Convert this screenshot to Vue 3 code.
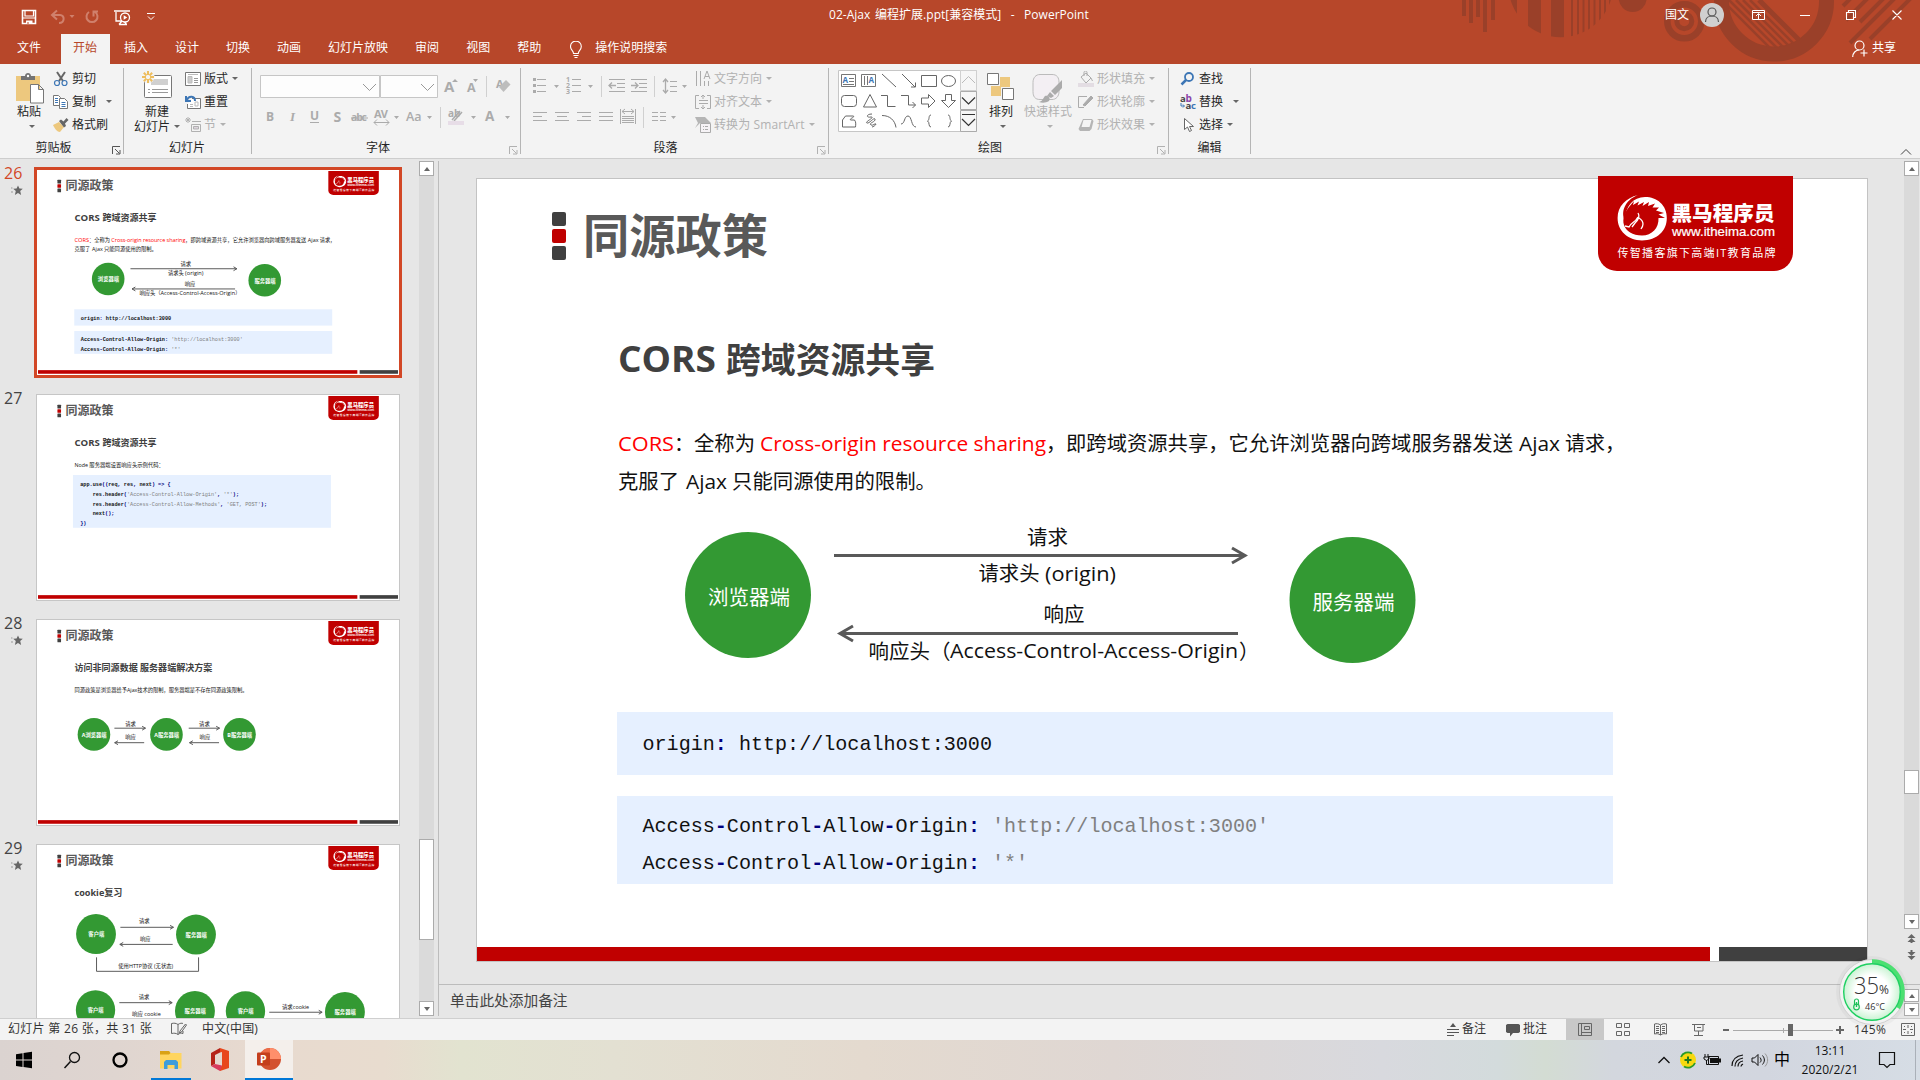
<script setup>
import { h } from 'vue'

const tabs = ['插入', '设计', '切换', '动画', '幻灯片放映', '审阅', '视图', '帮助']

// Text run: [x, baseline, size, text, width, class]
const t = (x, y, size, text, w, cls = 'ink') => ({ k: 'text', x, y, size, text, w, cls })
const circle = (x, y, r, label, w) => [
  { k: 'circle', x, y, r },
  t(x - w / 2 + 1, y + 9.5, 20.5, label, w, 'on-green')
]
const arrow = (x1, x2, y) => ({ k: 'arrow', x1, x2, y })
const box = (x, y, w, hgt) => ({ k: 'box', x, y, w, h: hgt })
const code = (x, y, runs) => ({ k: 'code', x, y, runs })

const allow = [['Access', ''], ['-', 'op'], ['Control', ''], ['-', 'op'], ['Allow', ''], ['-', 'op'], ['Origin', ''], [':', 'op']]
const corsTitle = [t(618, 371.5, 36, 'CORS', 98, 'head'), t(726, 373, 35, '跨域资源共享', 209, 'head')]

const slides = [
  {
    no: 26, star: true, items: [
      ...corsTitle,
      t(618, 451, 20.5, 'CORS', 56, 'red'), t(674, 451, 20.5, '：', 20),
      t(694, 451, 20.5, '全称为', 61), t(760, 451, 20.5, 'Cross-origin resource sharing', 286, 'red'),
      t(1046, 451, 20.5, '，', 20), t(1066, 451, 20.5, '即跨域资源共享，它允许浏览器向跨域服务器发送', 447),
      t(1519, 451, 20.5, 'Ajax', 41), t(1565, 451, 20.5, '请求，', 60),
      t(618, 488.5, 20.5, '克服了', 61), t(686, 488.5, 20.5, 'Ajax', 41), t(732, 488.5, 20.5, '只能同源使用的限制。', 204),
      ...circle(748, 595, 63, '浏览器端', 82), ...circle(1352.5, 600, 63, '服务器端', 82),
      arrow(834, 1245, 555.5), arrow(1238, 840, 633.5),
      t(1027, 544.5, 20.5, '请求', 41), t(978.5, 581, 20.5, '请求头', 61), t(1045, 581, 20.5, '(origin)', 71),
      t(1043.5, 621.5, 20.5, '响应', 41), t(868.5, 658.5, 20.5, '响应头（', 82),
      t(950, 658, 20.5, 'Access-Control-Access-Origin', 288), t(1239, 658.5, 20.5, '）', 20),
      box(617, 712, 996, 63), box(617, 796, 996, 88),
      code(642.500, 750, [['origin', ''], [':', 'op'], [' http://localhost:3000', '']]),
      code(642.500, 832, [...allow, [" 'http://localhost:3000'", 'str']]),
      code(642.500, 869, [...allow, [" '*'", 'str']])
    ]
  },
  {
    no: 27, star: false, items: [
      ...corsTitle,
      t(618, 454, 20.5, 'Node 服务器端设置响应头示例代码：', 345),
      box(612, 483, 996, 204),
      code(640, 522, [['app', ''], ['.', 'op'], ['use', ''], ['((', 'op'], ['req', ''], [',', 'op'], [' res', ''], [',', 'op'], [' next', ''], [') => {', 'op']]),
      code(688, 560, [['res', ''], ['.', 'op'], ['header', ''], ['(', 'op'], ["'Access-Control-Allow-Origin'", 'str'], [', ', 'op'], ["'*'", 'str'], [');', 'op']]),
      code(688, 599, [['res', ''], ['.', 'op'], ['header', ''], ['(', 'op'], ["'Access-Control-Allow-Methods'", 'str'], [', ', 'op'], ["'GET, POST'", 'str'], [');', 'op']]),
      code(688, 635, [['next', ''], ['();', 'op']]),
      code(640, 672, [['})', 'op']])
    ]
  },
  {
    no: 28, star: true, items: [
      t(618, 373, 35, '访问非同源数据 服务器端解决方案', 532, 'head'),
      t(618, 454, 20.5, '同源政策是浏览器给予Ajax技术的限制，服务器端是不存在同源政策限制。', 668),
      ...circle(693, 616, 63, 'A浏览器端', 96), ...circle(973, 616, 63, 'A服务器端', 96), ...circle(1255, 616, 63, 'B服务器端', 96),
      arrow(772, 892, 592), arrow(1059, 1178, 592), arrow(887, 773, 648), arrow(1176, 1062, 648),
      t(814, 584, 20.5, '请求', 41), t(1099, 584, 20.5, '请求', 41), t(814, 635, 20.5, '响应', 41), t(1101, 635, 20.5, '响应', 41)
    ]
  },
  {
    no: 29, star: true, items: [
      t(618, 373, 35, 'cookie', 115, 'head'), t(733, 373, 35, '复习', 70, 'head'),
      ...circle(701, 518, 77, '客户端', 61), ...circle(1087, 520, 77, '服务器端', 82),
      arrow(795, 1000, 492), arrow(997, 793, 558),
      t(867, 477, 20.5, '请求', 41), t(871, 546, 20.5, '响应', 41),
      { k: 'bracket', d: 'M703 608V662H1097V608' },
      t(787, 649, 20.5, '使用HTTP协议 (无状态)', 212),
      ...circle(699, 811, 76, '客户端', 61), ...circle(1083, 815, 77, '服务器端', 82),
      ...circle(1278, 815, 76, '客户端', 61), ...circle(1662, 819, 77, '服务器端', 82),
      arrow(791, 995, 783), arrow(997, 795, 855), arrow(1370, 1574, 820),
      t(866, 770, 20.5, '请求', 41), t(840, 835, 20.5, '响应 cookie', 111), t(1419, 808, 20.5, '请求cookie', 105)
    ]
  }
]

const svgText = (i) => h('text', { x: i.x, y: i.y, 'font-size': i.size, textLength: i.w, lengthAdjust: 'spacingAndGlyphs', class: 'st-' + i.cls }, i.text)

function drawItem(i) {
  if (i.k === 'text') return svgText(i)
  if (i.k === 'circle') return h('circle', { cx: i.x, cy: i.y, r: i.r, fill: '#339933' })
  if (i.k === 'box') return h('rect', { x: i.x, y: i.y, width: i.w, height: i.h, fill: '#e6f0ff' })
  if (i.k === 'bracket') return h('path', { d: i.d, class: 'st-line' })
  if (i.k === 'arrow') {
    const b = i.x2 > i.x1 ? -13 : 13
    return h('path', { class: 'st-line', d: `M${i.x1} ${i.y}H${i.x2}M${i.x2 + b} ${i.y - 7.5}L${i.x2} ${i.y}L${i.x2 + b} ${i.y + 7.5}` })
  }
  return h('text', { x: i.x, y: i.y, class: 'st-code' }, i.runs.map(([s, c]) => h('tspan', { class: c ? 'c-' + c : '' }, s)))
}

const logo = () => h('g', null, [
  h('path', { d: 'M1598 176H1793V252A19 19 0 0 1 1774 271H1617A19 19 0 0 1 1598 252Z', fill: '#c00000' }),
  h('path', { d: 'M1638 195C1626 198 1617.6 206 1617.6 218C1617.6 231 1628 240.400 1642 240.400C1657 240.400 1666.800 231 1666.800 218C1666.800 205 1657 197 1645 197C1633 197 1626 206 1624.500 220C1620 209 1628 198.500 1638 195Z', fill: '#fff' }),
  h('path', { d: 'M1629 207L1634 201L1633 205L1639 201.500L1637.500 205.500L1644 202L1642.500 206L1649 202L1648 206L1655 203.500L1652.500 207.500L1659 207.500L1656 210.500L1664 213L1658.500 214.500L1665 218L1658.500 218C1659 228 1652 235.500 1642 235.500C1632.500 235.500 1626 231 1624 225C1622 219 1625 212 1629 207Z', fill: '#c00000' }),
  h('path', { d: 'M1625 226L1629 227C1631 222 1635 223 1638 217M1638 213C1640 216 1639 219 1635 223L1632 227M1639 218C1645 222 1643 226 1641 229', fill: 'none', stroke: '#fff', 'stroke-width': 1.3 }),
  h('text', { x: 1671.5, y: 221, 'font-size': 20, textLength: 103, lengthAdjust: 'spacingAndGlyphs', class: 'st-logo-b' }, '黑马程序员'),
  h('text', { x: 1672, y: 235.6, 'font-size': 12.5, textLength: 103, lengthAdjust: 'spacingAndGlyphs', class: 'st-logo-u' }, 'www.itheima.com'),
  h('text', { x: 1617.5, y: 256.5, 'font-size': 11, textLength: 158, class: 'st-logo-s' }, '传智播客旗下高端IT教育品牌')
])

const SlideArt = (props) => h('svg', { viewBox: '477 179 1390 782', class: ['slide-art', props.small ? 'small' : ''] }, [
  h('rect', { x: 552, y: 212, width: 14, height: 14, rx: 2, fill: '#404040' }),
  h('rect', { x: 552, y: 229, width: 14, height: 14, rx: 2, fill: '#c00000' }),
  h('rect', { x: 552, y: 246, width: 14, height: 14, rx: 2, fill: '#404040' }),
  svgText(t(583, 253, 47, '同源政策', 185, 'title')),
  h('rect', { x: 477, y: 947, width: 1233, height: 14, fill: '#c00000' }),
  h('rect', { x: 1719, y: 947, width: 148, height: 14, fill: '#404040' }),
  ...props.items.map(drawItem),
  logo()
])
SlideArt.props = ['items', 'small']
</script>

<template>
  <div class="app">
    <header class="head">
      <svg class="pattern" width="500" height="64" viewBox="1420 0 500 64">
        <defs>
          <clipPath id="disc"><circle cx="1560.7" cy="-15" r="52.3" /></clipPath>
          <clipPath id="hole"><circle cx="1774" cy="1.500" r="46" /></clipPath>
        </defs>
        <g fill="#9a4029">
          <path d="M1462 0h4v16h-4zM1469 0h4v23h-4zM1476 0h4v17h-4zM1483 0h4v32h-4zM1491 0h4v20h-4z" />
          <path clip-path="url(#disc)" d="M1508 0h9v40h-9zM1528 0h13v40h-13zM1551 0h13v40h-13zM1571 0h2v40h-2zM1577 0h2v40h-2zM1582.500 0h2v40h-2zM1588 0h2v40h-2zM1593.500 0h2v40h-2zM1599 0h2v40h-2zM1604 0h2v40h-2zM1609 0h3v40h-3z" />
          <circle cx="1632.700" cy="-2" r="14" />
        </g>
        <g fill="none" stroke="#9a4029">
          <circle cx="1684.300" cy="21.300" r="17" stroke-width="6.600" />
          <circle cx="1684.300" cy="21.300" r="7.500" stroke-width="5" />
          <circle cx="1774" cy="1.500" r="52.500" stroke-width="15" />
          <path clip-path="url(#hole)" stroke-width="2.600" d="M1722 0l60 60M1729 0l60 60M1736 0l60 60M1743 0l60 60M1750 0l60 60" />
          <path clip-path="url(#hole)" stroke-width="5" d="M1759 0l50 50" />
          <path stroke-width="4" d="M1843 6l8-8M1846 20l22-22M1860 22l24-24M1850 43l46-46M1870 39l41-41" />
        </g>
      </svg>
      <div class="titlebar">
        <svg width="160" height="34" viewBox="0 0 160 34" fill="none" stroke="#fff">
          <path d="M22.500 10.500h13v13h-13z" stroke-width="1.600" /><path d="M25 10.500v5.500h8.500v-5.500M22.500 18h13" stroke-width="1.200" /><path d="M26 20.500h6.500v3.500h-6.500z" fill="#fff" stroke="none" /><path d="M28 22v2" stroke="#b7472a" />
          <g stroke="#d0806c" stroke-width="2"><path d="M57 10.500l-5 4.500 5 4.500M52 15h8c5 0 5 8-1 8" /><path d="M69.500 15h5l-2.500 3z" fill="#d0806c" stroke="none" /><path d="M89 12a5.500 5.500 0 1 0 6 0M98 11.500h-4.500v5" /></g>
          <path d="M114 11h16M116 12v9h6M119 24.500h8M122 21l-3 3.500M124 21l2.500 3.500" stroke-width="1.300" /><circle cx="125" cy="17.500" r="4.500" fill="#b7472a" stroke-width="1.300" /><path d="M123.700 15.300v4.400l3.500-2.200z" fill="#fff" stroke="none" />
          <path d="M147 13.500h8M148 16.500l3 3 3-3" />
        </svg>
        <div class="doc-title">02-Ajax 编程扩展.ppt[兼容模式]&nbsp; -&nbsp; PowerPoint</div>
        <div class="user">国文</div>
        <svg width="231" height="34" viewBox="1689 0 231 34" fill="none" stroke="#fff">
          <circle cx="1712" cy="15" r="12" fill="#d0d0d0" stroke="none" /><circle cx="1712" cy="12" r="4" stroke="#555" stroke-width="1.200" /><path d="M1705.500 22c0-8 13-8 13 0" stroke="#555" stroke-width="1.200" />
          <path d="M1752.500 10.500h12v9h-12zM1752.500 12.500h12M1758.500 19v-5M1756 16l2.500-2.500 2.500 2.500" />
          <path d="M1800 15.500h10" /><path d="M1846.500 12.500h7v7h-7zM1848.500 12.500v-2h7v7h-2M1892.500 10.500l9 9M1901.500 10.500l-9 9" stroke-width="1.100" />
        </svg>
      </div>
      <nav class="tabs">
        <span class="file">文件</span>
        <span class="active">开始</span>
        <span v-for="x in tabs" :key="x">{{ x }}</span>
        <svg class="bulb" width="12" height="18" viewBox="0 0 12 18" fill="none" stroke="#fff" stroke-width="1.100"><path d="M3.500 12.500c0-3-3-3.500-3-7a5.400 5.400 0 0 1 10.800 0c0 3.500-3 4-3 7zM3.500 14.500h5M4.500 16.500h3" /></svg>
        <span class="tell">操作说明搜索</span>
        <div class="share">
          <svg width="16" height="18" viewBox="0 0 16 18" fill="none" stroke="#fff" stroke-width="1.200"><circle cx="7.500" cy="5.500" r="4.500" /><path d="M.700 17c0-4 3-7 6.500-7M12 9.500v7M8.500 13h7" /></svg>
          共享
        </div>
      </nav>
    </header>

    <section class="ribbon">
      <div class="group g1">
        <div class="body">
          <div class="big paste">
            <svg width="30" height="32" viewBox="16 71 30 32"><path d="M17 75h24v25H17z" fill="#edc87e" /><path d="M22 79v-4h4c0-4 6-4 6 0h4v4z" fill="#737373" /><circle cx="29" cy="75" r="1.200" fill="#fff" /><path d="M31.500 83.500h8l5 5v13.500h-13zM39.500 83.500v5h5" fill="#fff" stroke="#777" /></svg>
            <b>粘贴</b><i class="dd" />
          </div>
          <div class="small-col">
            <div class="sb"><svg width="16" height="16" viewBox="0 0 16 16" fill="none"><path d="M4 1l6 9M12 1L6 10" stroke="#666" stroke-width="2" /><circle cx="4" cy="12" r="2.500" stroke="#3d76b5" stroke-width="1.200" /><circle cx="11.500" cy="12" r="2.500" stroke="#3d76b5" stroke-width="1.200" /></svg>剪切</div>
            <div class="sb"><svg width="16" height="16" viewBox="0 0 16 16" fill="#fff" stroke="#777"><path d="M.500 1.500h5l2 2v8h-7z" /><path d="M6.500 4.500h5l3 3v7h-8z" /><path d="M2 4.500h3M2 6.500h3M2 8.500h3M8.500 8.500h4M8.500 10.500h4M8.500 12.500h4" stroke="#3d76b5" /></svg>复制<i class="dd far" /></div>
            <div class="sb"><svg width="16" height="16" viewBox="0 0 16 16"><path d="M0 8l6-3 5 5-4 5c-3 0-5-3-7-7z" fill="#edc87e" /><path d="M6 4l2-1.500 2.500 2L13.500 1 15.500 3l-3.500 3.500L13 9l-2 1.500z" fill="#666" /></svg>格式刷</div>
          </div>
        </div>
        <div class="label">剪贴板</div>
        <svg class="launch dark" width="9" height="9" viewBox="0 0 9 9"><path d="M.500 8V.500H8M3 3l4.500 4.500M8 4v4H4" /></svg>
      </div>

      <div class="group g2">
        <div class="body">
          <div class="big newslide">
            <svg width="32" height="32" viewBox="140 69 32 32"><rect x="143.500" y="74.500" width="27" height="22" rx="1" fill="#fff" stroke="#777" /><path d="M150 78h17v6h-17z" fill="#d0d0d0" /><path d="M147 88.500h2M151 88.500h16M147 91.500h2M151 91.500h16" stroke="#999" /><circle cx="147" cy="76" r="6.500" fill="#f3f3f3" /><path d="M147 70v4M147 78v4M141 76h4M149 76h4M142.800 71.800l2.700 2.700M148.500 77.500l2.700 2.700M142.800 80.200l2.700-2.700M148.500 74.500l2.700-2.700" stroke="#edbd5e" stroke-width="2" /></svg>
            <b>新建</b><b class="l2">幻灯片<i class="dd" /></b>
          </div>
          <div class="small-col">
            <div class="sb"><svg width="16" height="16" viewBox="0 0 16 16"><path d="M.500 1.500h15v13h-15z" fill="#fff" stroke="#777" /><path d="M3 3.500h10M3 5.500h4v6.500H3z" fill="#ccc" stroke="#bbb" /><path d="M9 7.500h4M9 9.500h4M9 11.500h4" stroke="#999" /></svg>版式<i class="dd" /></div>
            <div class="sb"><svg width="16" height="16" viewBox="0 0 16 16" fill="none"><path d="M7 4.500h8.500v10h-13V10" fill="#fff" stroke="#777" /><path d="M5 10.500h3M5 12.500h3M10 8h3v4h-3z" stroke="#bbb" /><path d="M1 2v5h5M1.500 6.500C4 1 10 2 10 7" stroke="#3d76b5" stroke-width="2" /></svg>重置</div>
            <div class="sb off"><svg width="16" height="16" viewBox="0 0 16 16" stroke="#b1b1b1" fill="none"><path d="M3 0v6M0 3h6M1 1l4 4M5 1L1 5" /><path d="M7 4.500h9M6.500 7.500h9v7h-9z" /><path d="M8.500 9.500h5v2.500h-5z" fill="#ddd3dd" /></svg>节<i class="dd" /></div>
          </div>
        </div>
        <div class="label">幻灯片</div>
      </div>

      <div class="group g3">
        <div class="body">
          <svg width="268" height="72" viewBox="252 64 268 72" fill="none" stroke="#ababab" class="strip">
            <path d="M260.500 75.500h119v22h-119zM380.500 75.500h57v22h-57z" fill="#fdfdfd" stroke="#c6c6c6" />
            <path d="M363 84l6.500 6.500 6.500-6.500M421 84l6.500 6.500 6.500-6.500" stroke="#999" />
            <g class="gl"><text x="444" y="92" font-size="15">A</text><text x="467" y="92" font-size="12.500">A</text><text x="496" y="88" font-size="11">A</text>
              <text x="266" y="121" font-size="12">B</text><text x="290" y="121" font-size="13" class="it">I</text><text x="310" y="120" font-size="12">U</text><text x="333.500" y="121.500" font-size="14">S</text><text x="351" y="121" font-size="10.500" textLength="16">abc</text><text x="374" y="118" font-size="11" textLength="14">AV</text><text x="406" y="121" font-size="12.500" class="nb">Aa</text><text x="448" y="117" font-size="10">ab</text><text x="485" y="121" font-size="13.500">A</text></g>
            <path d="M452 82l3-3 3 3zM473 79h5l-2.500 3zM394 116h5l-2.500 3zM427 116h5l-2.500 3zM471 116h5l-2.500 3zM505 116h5l-2.500 3z" fill="#ababab" stroke="none" />
            <path d="M310 122.500h9M351 118h17M374 122.500h15M377 119.500l-3 3 3 3M386 119.500l3 3-3 3" />
            <path d="M486.500 76v21M440.500 107v21" stroke="#d0d0d0" />
            <path d="M499 87l7-7 4.500 4.500-7 7.500z" fill="#bdbdbd" stroke="none" /><path d="M460 111l-8 9M462 112l-8 9" stroke-width="1.500" /><path d="M448 121h16v4h-16z" fill="#e7dde7" stroke="none" />
          </svg>
        </div>
        <div class="label shift">字体</div>
        <svg class="launch" width="9" height="9" viewBox="0 0 9 9"><path d="M.500 8V.500H8M3 3l4.500 4.500M8 4v4H4" /></svg>
      </div>

      <div class="group g4">
        <div class="body">
          <svg width="170" height="72" viewBox="521 64 170 72" fill="none" stroke="#ababab" class="strip">
            <path d="M537 79.500h9M537 85.500h9M537 91.500h9M572 79.500h9M572 85.500h9M572 91.500h9M609 79.500h16M617 83.500h8M617 87.500h8M609 91.500h16M631 79.500h16M639 83.500h8M639 87.500h8M631 91.500h16M670 81.500h7M670 86.500h7M670 91.500h7" />
            <path d="M533 78h3v3h-3zM533 84h3v3h-3zM533 90h3v3h-3zM554 85h5l-2.500 3zM588 85h5l-2.500 3zM682 85h5l-2.500 3zM671 116h5l-2.500 3z" fill="#ababab" stroke="none" />
            <g class="gl"><text x="566" y="82" font-size="7">1</text><text x="566" y="88" font-size="7">2</text><text x="566" y="94" font-size="7">3</text></g>
            <path d="M616 85.500h-7M612 82.500l-3 3 3 3M631 85.500h7M635 82.500l3 3-3 3M665.500 79v14M663 82l2.500-3 2.500 3M663 90l2.500 3 2.500-3" stroke-width="1.300" />
            <path d="M601.500 76v21M654.500 76v21M643.500 107v21" stroke="#d0d0d0" />
            <path d="M533 112.500h14M533 116.500h9M533 120.500h14M555 112.500h14M557 116.500h10M555 120.500h14M577 112.500h14M582 116.500h9M577 120.500h14M599 112.500h14M599 116.500h14M599 120.500h14M652 112.500h6M652 116.500h6M652 120.500h6M660 112.500h6M660 116.500h6M660 120.500h6" />
            <path d="M620.500 109v15M635.500 109v15M622 111.500h12M625 109l-3 2.500 3 2.500M631 109l3 2.500-3 2.500M622 116.500h12M622 118.500h12M622 120.500h12M622 122.500h12" />
          </svg>
          <div class="small-col">
            <div class="sb off"><svg width="16" height="16" viewBox="0 0 16 16" fill="none" stroke="#ababab"><path d="M1.500 0v15M5.500 0v15M9.500 10v5M13.500 10v5M9 8l3-8 3 8M10 5.500h4" /></svg>文字方向<i class="dd" /></div>
            <div class="sb off"><svg width="16" height="16" viewBox="0 0 16 16" fill="none" stroke="#ababab"><path d="M4 1.500H.500v13H4M12 1.500h3.500v13H12M4 6.500h9M4 9.500h9M8 5V1M6 3l2-2 2 2M8 11v4M6 13l2 2 2-2" /></svg>对齐文本<i class="dd" /></div>
            <div class="sb off"><svg width="16" height="16" viewBox="0 0 16 16"><path d="M0 0h10l6 6H5L0 11l3-5z" fill="#b5b5b5" /><path d="M5.500 6.500h10v9h-10z" fill="#f6f3f6" stroke="#ababab" /><path d="M8 9.500h1M10 9.500h3M8 12.500h1M10 12.500h3" stroke="#ababab" /></svg><span class="smart">转换为 SmartArt</span><i class="dd" /></div>
          </div>
        </div>
        <div class="label shift">段落</div>
        <svg class="launch" width="9" height="9" viewBox="0 0 9 9"><path d="M.500 8V.500H8M3 3l4.500 4.500M8 4v4H4" /></svg>
      </div>

      <div class="group g5">
        <div class="body">
          <svg width="141" height="68" viewBox="837 67 141 68" fill="none" stroke="#666" class="gallery">
            <path d="M838.500 70.500h138v61h-138z" fill="#fff" stroke="#c6c6c6" />
            <path d="M841.500 74.500h14v12h-14zM861.500 74.500h14v12h-14zM849 78.500h5M849 81.500h5M843 84.500h11M864.500 76v9M867.500 76v9" stroke-width=".9" />
            <g class="blue"><text x="842.500" y="83" font-size="8">A</text><text x="868.500" y="83" font-size="8">A</text></g>
            <path d="M882 74l14 13M902 74l13 13M915.500 82.500v4.500h-4.500M921.500 75.500h15v11h-15z" /><ellipse cx="948.500" cy="81" rx="7" ry="5.500" />
            <rect x="841.500" y="95.500" width="15" height="11" rx="3" /><path d="M870 94.500l6.500 12.500h-13zM881 95.500h6.500v11h8M901 95.500h7.500v9.500h7M912.500 102l3 3-3 3M921.500 98h7v-3.500l6.500 6.500-6.500 6.500v-3.500h-7zM945.500 94.500h6v6h4l-7 7-7-7h4z" />
            <path d="M842.500 120l3-4h8c1 2-4 2-3 4h4c2 2 1 6 1 7h-13zM872 114c-6 0-6 4-1 3 5 0-7 5-4 6 2 1 7-6 8-4 1 3-7 4-4 6 2 1 4-2 5-1 0 1-3 3-4 3M882 115.500c8 0 13 5 14 12M901 124c4 0 3-8 7-8 4 0 3 11 8 11M931 115c-3 0-1 5-3.500 6 2.500 1 .500 6 3.500 6M948 115c3 0 1 5 3.500 6-2.500 1-.500 6-3.500 6" />
            <path d="M960.500 70.500h16v20h-16z" stroke="#d0d0d0" fill="#f6f6f6" /><path d="M960.500 91.500h16v18h-16zM960.500 110.500h16v21h-16z" stroke="#ababab" fill="#f6f6f6" />
            <path d="M962 83l6.500-6.500 6.500 6.500" stroke="#bbb" /><path d="M962 97.500l6.500 6.500 6.500-6.500M962 114.500h13M962 119l6.500 6.500 6.500-6.500" stroke="#333" stroke-width="1.200" />
          </svg>
          <div class="big arrange">
            <svg width="28" height="32" viewBox="987 71 28 32"><path d="M1000 76h10v10h-10zM991 85h10v10h-10z" fill="#edc87e" /><path d="M987.500 72.500h11v11h-11zM1002.500 87.500h11v11h-11z" fill="#fff" stroke="#777" /></svg>
            <b>排列</b><i class="dd" />
          </div>
          <div class="big quick off">
            <svg width="32" height="32" viewBox="1034 71 32 32"><path d="M1042 73.500h12c5 0 7 3 7 8v9c0 5-3 8-7 8h-12c-5 0-7-3-7-8v-9c0-5 3-8 7-8z" fill="#f3eff3" stroke="#bbb" /><path d="M1064 79v8l-7 7-4-4zM1052 91l4 4-3 2-4-2z" fill="#ababab" /><path d="M1041 101c4-1 4-4 6-6 3-1 6 2 4 5-3 2-7 2-10 1z" fill="#ababab" /></svg>
            <b>快速样式</b><i class="dd" />
          </div>
          <div class="small-col">
            <div class="sb off"><svg width="16" height="16" viewBox="0 0 16 16" fill="none" stroke="#ababab"><path d="M3 6l5-4 5 5-5 5zM6 5V1.500c0-2 3-2 3 0V5M13 7l1.500 3" /><path d="M0 12h16v4H0z" fill="#e3dde3" stroke="none" /></svg>形状填充<i class="dd" /></div>
            <div class="sb off"><svg width="16" height="16" viewBox="0 0 16 16" fill="none" stroke="#ababab"><path d="M9 2.500H.500v11H6" /><path d="M5 11l8-9 2 2-8 8z" fill="#ababab" /></svg>形状轮廓<i class="dd" /></div>
            <div class="sb off"><svg width="16" height="16" viewBox="0 0 16 16"><path d="M5 2h9l1.500 2-2 8-2 2H2L.500 12z" fill="#b5b5b5" /><path d="M5.500 3h8l-2 7h-8z" fill="#f5f5f5" /></svg>形状效果<i class="dd" /></div>
          </div>
        </div>
        <div class="label shift2">绘图</div>
        <svg class="launch" width="9" height="9" viewBox="0 0 9 9"><path d="M.500 8V.500H8M3 3l4.500 4.500M8 4v4H4" /></svg>
      </div>

      <div class="group g6">
        <div class="body">
          <div class="small-col">
            <div class="sb"><svg width="16" height="16" viewBox="0 0 16 16" fill="none" stroke="#3d76b5"><circle cx="9" cy="6" r="4" stroke-width="1.800" /><path d="M6 9l-4.500 4.500" stroke-width="2.500" /></svg>查找</div>
            <div class="sb"><svg class="ab" width="16" height="16" viewBox="0 0 16 16"><text x="0" y="7.500" font-size="9.500" fill="#444">a</text><text x="5.500" y="7.500" font-size="10" fill="#8b44a8">b</text><text x="5.500" y="15" font-size="9.500" fill="#444">a</text><text x="11" y="15" font-size="9.500" fill="#3d76b5">c</text><path d="M1 9v3h3M3 10.500L4.500 12 3 13.500" stroke="#3d76b5" fill="none" /></svg>替换<i class="dd far" /></div>
            <div class="sb"><svg width="16" height="16" viewBox="0 0 16 16"><path d="M4.500 1.500v11l3-2.500 2 4.500 2-1-2-4h4z" fill="#fff" stroke="#666" /></svg>选择<i class="dd" /></div>
          </div>
        </div>
        <div class="label shift">编辑</div>
      </div>
      <svg class="collapse" width="12" height="8" viewBox="0 0 12 8"><path d="M1 6.500l5-5 5 5" fill="none" stroke="#444" /></svg>
    </section>

    <main class="work">
      <aside class="thumbs">
        <div v-for="s in slides" :key="s.no" class="row" :class="{ sel: s.no === 26 }">
          <div class="num">
            <span>{{ s.no }}</span>
            <svg v-if="s.star" width="12" height="11" viewBox="0 0 12 11"><path d="M7 .500l1.400 3.100 3.400.200-2.600 2.300.900 3.800-3.100-2-3.100 2 .900-3.800L2.200 3.800l3.400-.200z" fill="#666" /><path d="M0 3h1.500M0 7h2" stroke="#999" /></svg>
          </div>
          <div class="thumb"><SlideArt :items="s.items" small="1" /></div>
        </div>
      </aside>
      <div class="sbar left">
        <span class="btn up" /><span class="track t1" /><span class="grip" /><span class="track t2" /><span class="btn down" />
      </div>
      <section class="editor">
        <div class="stage">
          <div class="slide"><SlideArt :items="slides[0].items" /></div>
          <div class="sbar right">
            <span class="btn up" /><span class="track t1" /><span class="grip" /><span class="track t2" /><span class="btn down" />
            <svg width="15" height="34" viewBox="0 0 15 34" fill="#666"><path d="M7.500 3l4 4h-8zM7.500 7l4 4h-8zM6.500 10h2v2h-2zM3.500 21h8l-4 4zM3.500 25h8l-4 4zM6.500 19h2v2h-2z" /></svg>
          </div>
        </div>
        <div class="notes">
          <span>单击此处添加备注</span>
          <div class="nb"><span class="btn up" /><span class="btn down" /></div>
        </div>
      </section>
    </main>

    <footer class="status">
      <span class="s1">幻灯片 第 26 张，共 31 张</span>
      <svg width="16" height="14" viewBox="0 0 16 14" fill="none" stroke="#666"><path d="M7 12.500C5 11 3 11 .500 11.500v-10C3 1 5 1 7 2.500zM7 2.500C9 1 11 1 12 1.500M7 12.500c2-1.500 3-1.500 5-1V9M14.500 2L9 9l-.500 2 2-1L15.500 3z" /></svg>
      <span class="s2">中文(中国)</span>
      <div class="s-right">
        <svg width="12" height="14" viewBox="0 0 12 14"><path d="M6 0l3 4H3z" fill="#555" /><path d="M0 6.500h12M0 9.500h12M0 12.500h7" stroke="#555" /></svg>
        <span class="s3">备注</span>
        <svg width="14" height="14" viewBox="0 0 14 14"><path d="M1.500 1h11l1.500 1v7l-1.500 1H7l-3 3.500V10H1.500L0 9V2z" fill="#555" /></svg>
        <span class="s4">批注</span>
        <svg width="354" height="22" viewBox="1566 1018 354 22" fill="none" stroke="#666" class="views">
          <path d="M1566 1018h38v22h-38z" fill="#c8c8c8" stroke="none" />
          <path d="M1578.500 1022.500h13v12h-13zM1581.500 1022.500v12M1581.500 1031.500h10M1584.500 1025.500h5v3h-5z" />
          <path d="M1616.500 1022.500h5v4h-5zM1624.500 1022.500h5v4h-5zM1616.500 1030.500h5v4h-5zM1624.500 1030.500h5v4h-5z" />
          <path d="M1660.500 1024c-2-1.500-4-1.500-6-1v10c2-.500 4-.500 6 1 2-1.500 4-1.500 6-1v-10c-2-.500-4-.500-6 1zM1660.500 1024v10M1656 1025.500h3M1656 1027.500h3M1656 1029.500h3M1656 1031.500h3M1662 1025.500h3M1662 1027.500h3M1662 1029.500h3M1662 1031.500h3" />
          <path d="M1692 1023.500h13M1694.500 1024v6h8.500v-6M1698.500 1030v5M1694 1034.500h9M1697 1026.500h4" />
          <path d="M1723 1029h6M1836 1029h8M1840 1025v8" stroke-width="2" /><path d="M1733 1029.500h100M1783.500 1027v5" stroke="#aaa" />
          <path d="M1788 1023h5v12h-5z" fill="#666" stroke="none" />
          <path d="M1901.500 1022.500h13v12h-13z" /><path d="M1908 1024v3M1908 1030v3M1903 1028.500h3M1910 1028.500h3M1904 1025l1 1M1912 1025l-1 1M1904 1032l1-1M1912 1032l-1-1" />
          <text x="1854" y="1032.500" class="zoomtxt" textLength="32">145%</text>
        </svg>
      </div>
    </footer>

    <footer class="task">
      <svg width="245" height="40" viewBox="0 1040 245 40" fill="none">
        <path d="M16 1054.200l6.500-1v6.300H16zM23.500 1053l8.500-1.300v7.800h-8.500zM16 1060.500h6.500v6.500l-6.500-1zM23.500 1060.500h8.500v7.800l-8.500-1.300z" fill="#000" />
        <circle cx="74.500" cy="1057.500" r="5" stroke="#111" stroke-width="1.300" /><path d="M70.500 1061.500l-6 6.500" stroke="#111" stroke-width="1.500" />
        <circle cx="120" cy="1060" r="6.500" stroke="#000" stroke-width="2.300" />
        <path d="M160 1051h9l1.500 2h11v15.500H160z" fill="#ffd55f" /><path d="M160 1051h9l1.500 2-1.500 1.500h-9z" fill="#d9a215" /><path d="M164 1062l2-2h10l2 2v7h-3.500v-4h-7v4H164z" fill="#3f9ddb" /><path d="M151 1078h40v2h-40z" fill="#0078d7" />
        <path d="M220 1048l-9 5v13l4-2v-9l5-2.500z" fill="#b52318" /><path d="M220 1048l9 3v17l-9 3v-4.500l2-.500v-14l-2 .500z" fill="#e8471c" /><path d="M211 1066l4-2 7 1.500-2 5.500z" fill="#d83b5e" />
      </svg>
      <div class="ppt">
        <svg width="25" height="24" viewBox="257 1048 25 24"><circle cx="270" cy="1060" r="11" fill="#d35230" /><path d="M270 1049a11 11 0 0 1 11 11h-11z" fill="#ff8f6b" /><path d="M270 1049v11h-11a11 11 0 0 1 11-11z" fill="#ed6c47" /><rect x="257" y="1053.500" width="13" height="13" rx="1" fill="#c43e1c" /><text x="260" y="1064" font-size="10.500" font-weight="bold" fill="#fff" font-family="Open Sans, sans-serif">P</text></svg>
      </div>
      <svg class="tray" width="122" height="40" viewBox="1652 1040 122 40" fill="none" stroke="#111">
        <path d="M1658.500 1063l5.500-5.500 5.500 5.500" stroke-width="1.300" />
        <circle cx="1688" cy="1060" r="8" fill="#f7d90f" stroke="none" /><path d="M1681 1057a7.500 7.500 0 0 1 11-3.500M1695 1063a7.500 7.500 0 0 1-11 3.500" stroke="#2b9a2b" stroke-width="1.800" /><path d="M1688 1056.500v7M1684.500 1060h7" stroke="#1f7a1f" stroke-width="2" />
        <path d="M1708.500 1056.500h10v8h-10z" /><path d="M1710 1058h8v5h-8zM1719 1058.500h2v4h-2z" fill="#111" stroke="none" /><path d="M1705 1054v3M1708 1054v3M1704 1057h5v2l-2.500 1.500-2.500-1.500zM1706.500 1060v4.500h2" />
        <path d="M1732 1066c0-6 4-10 11-11M1735 1066.500c0-4.500 3-7.500 8-8.500M1738 1066.500c0-3 2-5 5-5.500M1741 1066.500c0-1 1-2 2-2.500" stroke-width="1.200" />
        <path d="M1752 1058h2.500l3.500-3.500v11l-3.500-3.500h-2.500zM1760 1057.500c1.500 2 1.500 3.500 0 5M1762.500 1055.500c2.500 3 2.500 6 0 9" /><path d="M1765 1053.500c3.500 4 3.500 9 0 13" stroke="#999" />
      </svg>
      <span class="ime">中</span>
      <div class="clock"><span>13:11</span><span>2020/2/21</span></div>
      <svg width="48" height="40" viewBox="1872 1040 48 40" fill="none" stroke="#111"><path d="M1879.500 1052.500h15v12h-4.500l-3 3-3-3h-4.500z" stroke-width="1.200" /><path d="M1915.500 1040v40" stroke="#aab0b8" /></svg>
    </footer>

    <svg class="meter" width="76" height="76" viewBox="-38 -38 76 76">
      <defs><radialGradient id="glow"><stop offset=".6" stop-color="#fff" /><stop offset="1" stop-color="#c9f3d2" /></radialGradient></defs>
      <circle r="36" fill="#000" opacity=".03" /><circle r="32.500" fill="#f3f3f3" stroke="#d0d0d0" />
      <path d="M0-30.500A30.500 30.500 0 0 1 26 16" fill="none" stroke="#4be071" stroke-width="4.500" />
      <circle r="28.300" fill="url(#glow)" stroke="#1fd062" stroke-width="1.400" />
      <text x="-18" y="1.500" font-size="23" textLength="25" lengthAdjust="spacingAndGlyphs" class="thin">35</text><text x="7" y="1.500" font-size="12">%</text>
      <path d="M-17.500 4v-4a2 2 0 0 1 4 0v4" transform="translate(0 9)" fill="none" stroke="#1fc05a" stroke-width="1.200" /><circle cx="-15.500" cy="15" r="2.800" fill="none" stroke="#1fc05a" stroke-width="1.200" /><path d="M-15.500 10v5" stroke="#1fc05a" stroke-width="1.400" />
      <text x="-7" y="17.500" font-size="9.500" textLength="20" lengthAdjust="spacingAndGlyphs">46°C</text>
    </svg>
  </div>
</template>

<style>
body { margin: 0; overflow: hidden; }
.slide-art { display: block; width: 100%; height: 100%; overflow: visible; font-family: "Open Sans", "Noto Sans CJK SC", sans-serif; }
.slide-art.small { overflow: hidden; }
.slide-art text { white-space: pre; }
.st-ink { fill: #111; }
.st-red { fill: #f00; }
.st-head { fill: #404040; font-weight: 700; }
.st-title { fill: #595959; font-weight: 700; }
.st-on-green { fill: #fff; }
.small .st-on-green { font-weight: 700; }
.st-line { fill: none; stroke: #595959; stroke-width: 3; }
.small .st-line { stroke-width: 3.800; }
.st-code { font-family: "Liberation Mono", monospace; font-size: 20.080px; fill: #111; }
.small .st-code { font-weight: 700; transform: translateY(3px); }
.c-op { fill: #000080; font-weight: 700; }
.c-str { fill: #808080; }
.small .c-str { font-weight: 400; }
.st-logo-b { fill: #fff; font-weight: 900; }
.st-logo-u { fill: #fff; font-family: "Liberation Sans", sans-serif; stroke: #fff; stroke-width: .2; }
.st-logo-s { fill: #fff; }
</style>

<style scoped>
.app { position: relative; width: 1920px; height: 1080px; display: flex; flex-direction: column; overflow: hidden; background: #e6e6e6; color: #262626; font: 12px/16px "Open Sans", "Noto Sans CJK SC", sans-serif; }
.app svg { flex: none; display: block; }
.head { position: relative; height: 64px; background: #b7472a; color: #fff; }
.pattern { position: absolute; right: 0; top: 0; }
.titlebar { position: relative; height: 34px; display: flex; }
.doc-title { margin-left: 669px; width: 836px; line-height: 30px; white-space: pre; letter-spacing: .02px; word-spacing: 1.6px; }
.user { width: 24px; line-height: 30px; }
.tabs { position: relative; height: 30px; display: flex; align-items: stretch; line-height: 28px; }
.tabs > span { padding: 0 13.500px; white-space: nowrap; }
.tabs .file { padding-left: 17px; padding-right: 20px; }
.tabs .active { background: #f3f3f3; color: #b7472a; padding: 0 13px 0 12px; margin-right: .5px; }
.tabs .bulb { margin: 7px 0 0 15.500px; }
.tabs .tell { padding-left: 13px; }
.share { margin-left: auto; margin-right: 24px; display: flex; gap: 4px; }
.share svg { margin-top: 6px; }

.ribbon { position: relative; height: 94px; flex: none; background: #f3f3f3; border-bottom: 1px solid #cdcdcd; display: flex; }
.group { position: relative; box-sizing: border-box; height: 90px; display: flex; flex-direction: column; }
.group::after { content: ""; position: absolute; right: 0; top: 4px; width: 1px; height: 86px; background: #b5b5b5; }
.g1 { width: 124px; } .g2 { width: 128px; } .g3 { width: 269px; } .g4 { width: 308px; } .g5 { width: 340px; } .g6 { width: 82px; }
.body { display: flex; height: 72px; flex: none; }
.label { text-align: center; height: 20px; line-height: 23px; padding-right: 17px; }
.label.shift { padding-right: 10px; } .label.shift2 { padding-right: 18px; }
.g2 .label { padding-right: 2px; } .g3 .label.shift { padding-right: 17px; } .g4 .label.shift { padding-right: 19px; } .g6 .label.shift { padding-right: 1px; }
.launch { position: absolute; right: 3px; top: 82px; fill: none; stroke: #b1b1b1; }
.launch.dark { stroke: #555; }
.big { display: flex; flex-direction: column; align-items: center; padding-top: 8px; }
.big b { font-weight: 400; line-height: 15px; white-space: nowrap; }
.big > .dd { margin: 6px 0 0 3px; }
.paste { width: 44px; margin-left: 8px; } .paste b { margin-right: 2px; }
.newslide { width: 48px; margin-left: 9px; padding-top: 6px; }
.newslide b { margin-top: 1.500px; } .newslide .l2 { margin-top: 0; display: flex; align-items: center; }
.dd { display: inline-block; width: 0; height: 0; flex: none; border: 3px solid transparent; border-top-color: #666; border-bottom: 0; margin-left: 4px; }
.dd.far { margin-left: 10px; }
.off { color: #b1b1b1; } .off .dd { border-top-color: #b1b1b1; }
.small-col { display: flex; flex-direction: column; padding-top: 3px; }
.sb { height: 23px; display: flex; align-items: center; white-space: nowrap; }
.sb svg { margin-right: 3px; }
.smart { letter-spacing: .1px; }
.g1 .small-col { margin-left: 1px; } .g2 .small-col { margin-left: 4px; }
.g4 .small-col { margin-left: 4px; }
.gl text { font-weight: 700; fill: #ababab; stroke: none; } .gl .it { font-style: italic; font-family: "Liberation Serif", serif; } .gl .nb { font-weight: 600; }
.gallery { margin: 3px 0 0 8px; } .blue text { fill: #3d76b5; stroke: none; font-weight: 700; }
.arrange { width: 40px; margin-left: 3px; } .quick { width: 54px; margin-left: 0; margin-right: 1px; }
.g5 .small-col { margin-left: 2px; }
.g6 .small-col { margin-left: 11px; }
.ab { overflow: visible; } .ab text { font-weight: 700; }
.collapse { position: absolute; right: 8px; top: 84px; }

.work { flex: 1; display: flex; min-height: 0; overflow: hidden; }
.thumbs { width: 419px; height: 859px; overflow: hidden; padding-top: 10px; box-sizing: border-box; flex: none; }
.row { display: flex; height: 225px; }
.num { width: 36px; flex: none; color: #444; }
.num span { display: block; font-size: 16px; line-height: 16px; margin: -4px 0 0 4px; }
.num svg { margin: 4px 0 0 11px; }
.sel .num { color: #d24726; }
.thumb { width: 360px; height: 203px; padding: 1px; border: 1px solid #c6c6c6; background: #fff; flex: none; }
.sel .thumb { border-color: #d24726; outline: 2px solid #d24726; }
.sbar { width: 15px; display: flex; flex-direction: column; flex: none; }
.btn { width: 13px; height: 13px; flex: none; background: #fff; border: 1px solid #ababab; display: flex; align-items: center; justify-content: center; }
.btn::after { content: ""; border: 3.500px solid transparent; }
.up::after { border-bottom: 4px solid #666; border-top: 0; } .down::after { border-top: 4px solid #666; border-bottom: 0; }
.track { background: #dadada; }
.grip { background: #fff; border: 1px solid #ababab; width: 13px; flex: none; }
.left { margin-top: 2px; border-right: 1px solid #bcbcbc; padding-right: 4px; height: 855px; }
.left .t1 { height: 663px; } .left .grip { height: 99px; } .left .t2 { height: 61px; }
.editor { flex: 1; display: flex; flex-direction: column; }
.stage { height: 825px; display: flex; }
.slide { width: 1390px; height: 782px; margin: 19px 0 0 37px; border: 1px solid #c3c3c3; background: #fff; flex: none; }
.right { margin: 2px 0 0 auto; padding-right: 1px; }
.right .t1 { height: 594px; } .right .grip { height: 22px; } .right .t2 { height: 120px; } .right svg { margin-top: 2px; }
.notes { height: 33px; border-top: 1px solid #bcbcbc; display: flex; padding: 0 1px 0 11px; font-size: 14.700px; line-height: 30px; color: #444; justify-content: space-between; }
.nb { display: flex; flex-direction: column; padding-top: 4px; } .nb .btn { height: 11px; margin-bottom: 1px; }

.status { height: 21px; border-top: 1px solid #cfcfcf; background: #f3f3f3; display: flex; flex: none; align-items: center; line-height: 19px; color: #333; }
.status > span, .s3, .s4 { padding-bottom: 2px; }
.status > svg { margin-top: -1px; }
.s1 { margin-left: 8px; width: 163px; letter-spacing: .3px; } .s2 { margin-left: 15px; letter-spacing: .15px; }
.s-right { margin-left: auto; display: flex; align-items: center; }
.s3 { margin: 0 20px 0 3px; } .s4 { margin: 0 19px 0 3px; }
.zoomtxt { fill: #333; stroke: none; font-size: 12px; }
.task { height: 40px; flex: none; display: flex; color: #111; background: linear-gradient(90deg, #dbd3d0 0, #dfd5d0 6%, #e8dacf 14%, #e8dccf 20%, #e2e3d0 24%, #e3e0d2 32%, #e4dacf 45%, #dfd7d3 58%, #d8d9de 72%, #d3dbdc 78%, #d3dcd3 80.500%, #d3d7de 84%, #d2d6df 92%, #d6dde5 100%); }
.ppt { width: 48px; height: 38px; border-bottom: 2px solid #0078d7; background: #f4efeb; display: flex; justify-content: center; align-items: center; }
.tray { margin-left: auto; }
.ime { font-size: 16px; line-height: 38px; width: 26px; color: #000; }
.clock { width: 60px; margin-right: 12px; display: flex; flex-direction: column; align-items: center; line-height: 19px; padding-top: 1px; }
.meter { position: absolute; left: 1834px; top: 954px; fill: #333; }
.thin { font-weight: 300; }
</style>
